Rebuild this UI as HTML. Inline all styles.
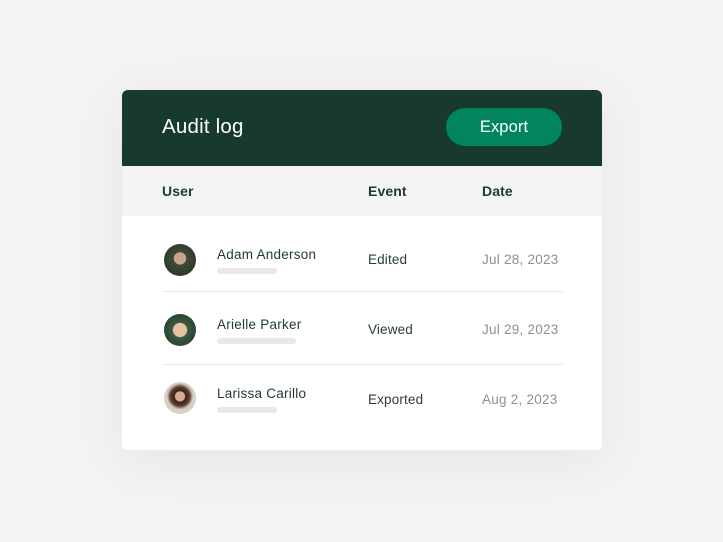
<!DOCTYPE html>
<html><head><style>
body{margin:0;width:723px;height:542px;background:#f3f3f3;font-family:"Liberation Sans",sans-serif;position:relative;overflow:hidden}
.card{position:absolute;left:122px;top:90px;width:480px;height:360px;background:#fff;border-radius:6px;overflow:hidden;box-shadow:0 10px 50px rgba(0,0,0,0.06)}
.hd{position:absolute;left:0;top:0;width:480px;height:76px;background:#183a2e}
.t{position:absolute;color:#fff;font-size:20.5px;left:40px;top:25px;letter-spacing:0.2px}
.btn{position:absolute;left:324px;top:18px;width:116px;height:38px;border-radius:19px;background:#00855e;color:#fff;font-size:16.5px;text-align:center;line-height:38px;letter-spacing:0.1px}
.ch{position:absolute;top:76px;left:0;width:480px;height:50px;background:#f4f4f4}
.ch span{position:absolute;top:17px;font-size:14px;font-weight:bold;color:#1d3a30;letter-spacing:0.1px}
.a{position:absolute;left:42px;width:32px;height:32px;border-radius:50%}
.n{position:absolute;left:95px;font-size:13.5px;color:#1d3a30;letter-spacing:0.25px}
.bar{position:absolute;left:95px;height:6px;border-radius:3px;background:#e8e8e8}
.e{position:absolute;left:246px;font-size:13.5px;color:#2a3d35;letter-spacing:0.15px}
.d{position:absolute;left:360px;font-size:13.5px;color:#8a918e;letter-spacing:0.25px}
.hr{position:absolute;left:41px;width:399px;height:1px;background:#e6e6e6}
</style></head><body>
<div class="card">
<div class="hd"><div class="t">Audit log</div><div class="btn">Export</div></div>
<div class="ch"><span style="left:40px">User</span><span style="left:246px">Event</span><span style="left:360px">Date</span></div>

<div class="a" style="top:154px;background:radial-gradient(circle at 50% 45%,#c9a58c 0 25%,#3f4a36 27%,#2e3a2a 70%)"></div>
<div class="n" style="top:157px">Adam Anderson</div>
<div class="bar" style="top:178px;width:60px"></div>
<div class="e" style="top:162px">Edited</div>
<div class="d" style="top:162px">Jul 28, 2023</div>
<div class="hr" style="top:201px"></div>

<div class="a" style="top:224px;background:radial-gradient(circle at 50% 50%,#e6c2a0 0 30%,#3c5a43 33%,#2b4533 70%)"></div>
<div class="n" style="top:227px">Arielle Parker</div>
<div class="bar" style="top:248px;width:79px"></div>
<div class="e" style="top:232px">Viewed</div>
<div class="d" style="top:232px">Jul 29, 2023</div>
<div class="hr" style="top:274px"></div>

<div class="a" style="top:292px;background:radial-gradient(circle at 50% 45%,#d8ab90 0 20%,#3a231b 23%,#5a3a2c 40%,#d9d0c4 55%)"></div>
<div class="n" style="top:296px">Larissa Carillo</div>
<div class="bar" style="top:317px;width:60px"></div>
<div class="e" style="top:302px">Exported</div>
<div class="d" style="top:302px">Aug 2, 2023</div>
</div>
</body></html>
